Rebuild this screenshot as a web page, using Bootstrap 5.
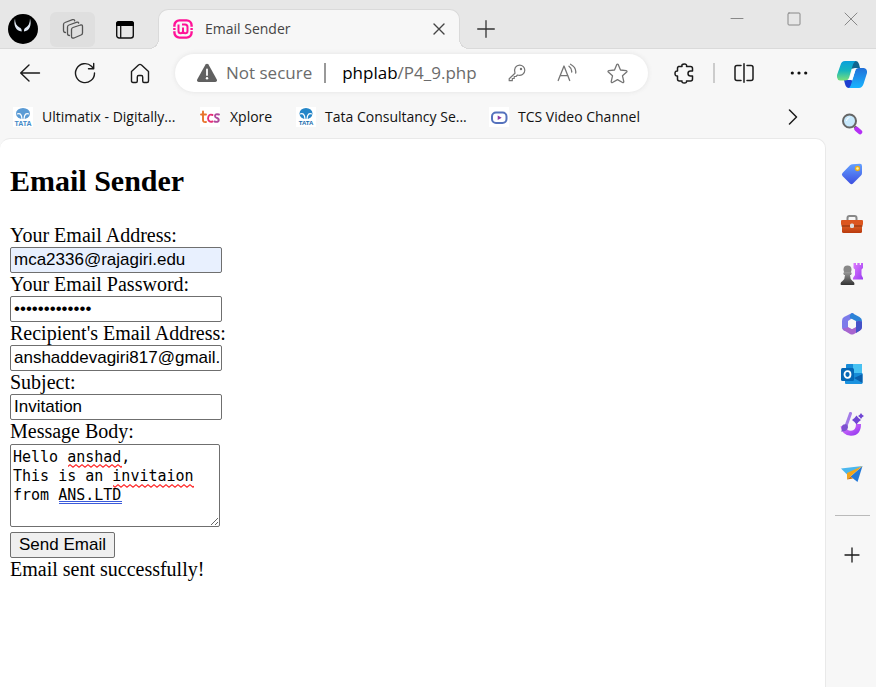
<!DOCTYPE html>
<html lang="en">
<head>
<meta charset="utf-8">
<meta name="viewport" content="width=device-width, initial-scale=1">
<title>Email Sender</title>
<link href="https://cdn.jsdelivr.net/npm/bootstrap@5.3.0/dist/css/bootstrap.min.css" rel="stylesheet">
<style>
  body { font-family: "Open Sans", "Noto Sans", sans-serif; font-size: 14px; line-height: 20px; color: #1b1b1b; background: #f7f7f7; }
  svg { display: block; flex: none; }
  .ln { fill: none; stroke: currentColor; stroke-linecap: round; stroke-linejoin: round; }
  .plain { border: 0; background: transparent; padding: 0; color: inherit; display: flex; align-items: center; justify-content: center; }
  .strip { height: 49px; background: #e7e7e7; border-bottom: 1px solid #dadada; }
  .strip-tools { width: 158px; padding: 10px 0 0 8px; }
  .workspaces { width: 45px; height: 35px; background: #dfdfdf; border-radius: 6px; color: #555; margin-left: 12px; margin-right: 21px; }
  .page-tab { position: relative; flex: 0 1 302px; height: 40px; margin: 9px 0 -1px; padding: 0 13px 2px 14px; background: #f7f7f7; border: 1px solid #dadada; border-bottom: 0; border-radius: 10px 10px 0 0; color: #444; }
  .page-tab::before, .page-tab::after { content: ""; position: absolute; bottom: 0; width: 10px; height: 10px; }
  .page-tab::before { left: -10px; background: radial-gradient(circle at 0 0, #e7e7e7 9px, #dadada 9px, #dadada 10px, #f7f7f7 10px); }
  .page-tab::after { right: -10px; background: radial-gradient(circle at 100% 0, #e7e7e7 9px, #dadada 9px, #dadada 10px, #f7f7f7 10px); }
  .new-tab { width: 52px; height: 40px; color: #333; margin-top: 9px; }
  .win-buttons { gap: 7px; color: #888; }
  .win-buttons button { width: 50px; height: 38px; }
  .toolbar { height: 48px; padding-left: 2px; }
  .tool { width: 55px; height: 40px; }
  .address { height: 38px; margin: 0 8px; padding: 0 6px 0 21px; border-radius: 19px; background: #fff; box-shadow: 0 0 5px #e2e2e2; font-size: 17px; line-height: 24px; color: #6b6b6b; }
  .address button { width: 50px; height: 36px; color: #757575; }
  .host { color: #000; }
  .bar { width: 2px; height: 20px; margin: 0 16px 0 12px; background: #999; }
  .bar-soft { width: 2px; height: 20px; margin: 0 1px 0 2px; background: #ccc; }
  .bookmarks { display: grid; grid-template-columns: 187px 96px 193px auto 1fr; height: 41px; padding: 0 0 2px 13px; align-items: center; }
  .bookmarks a { color: #111; text-decoration: none; display: flex; gap: 9px; align-items: center; white-space: nowrap; }
  .bookmarks button { width: 30px; height: 30px; margin-right: 18px; justify-self: end; }
  .viewport-page { background: #fff; border: 1px solid #e9e9e9; border-left: 0; border-bottom: 0; border-radius: 10px 10px 0 0; padding: 24px 10px 20px; font-family: "Liberation Serif", serif; font-size: 20px; line-height: 23px; color: #000; }
  .viewport-page h1 { font-size: 30px; line-height: 35px; font-weight: 700; margin: 0 0 26px; }
  .viewport-page label { display: block; }
  .field, .message, .send { border: 1px solid #6f6f6f; border-radius: 2px; color: #000; font-family: "Liberation Sans", sans-serif; font-size: 17px; }
  .field { display: block; width: 212px; height: 26px; padding: 0 1px 0 3px; background: #fff; }
  .autofilled { background: #e8f0fe; }
  .message-box { position: relative; width: 210px; margin-top: 1px; }
  .message { display: block; width: 210px; height: 83px; padding: 3px 2px; font-family: "DejaVu Sans Mono", monospace; font-size: 15px; line-height: 19px; overflow: hidden; }
  .proofing { position: absolute; left: 0; top: 0; pointer-events: none; }
  .send { display: block; height: 26px; margin-top: 5px; padding: 0 8px; background: #efefef; line-height: 22px; }
  .side { width: 50px; flex: none; }
  .side button { width: 50px; height: 50px; padding-left: 2px; }
  .side hr { width: 35px; margin: 16px 6px 14px 9px; border-color: #888; opacity: .55; }
</style>
<script src="https://cdn.jsdelivr.net/npm/bootstrap@5.3.0/dist/js/bootstrap.bundle.min.js"></script>
</head>
<body class="d-flex flex-column min-vh-100">

<header class="strip d-flex">
  <div class="strip-tools d-flex align-items-center flex-shrink-0">
    <button class="plain" type="button" aria-label="Profile">
      <svg width="30" height="30" viewBox="0 0 30 30"><circle cx="15" cy="15" r="15" fill="#000"/><path d="M7 4.500C5 11 8 17 13.700 17.500C13.900 15.500 13 14 11.500 13.500C8.500 12 7 9 7 4.500ZM22 4.500C24 11 21.500 17 16 17.500C15.800 15.500 16.500 14 18 13.500C20.500 12 22 9 22 4.500Z" fill="#dfe7f2"/></svg>
    </button>
    <button class="plain workspaces" type="button" aria-label="Workspaces">
      <svg class="ln" width="22" height="22" viewBox="0 0 22 22" stroke-width="1.300"><path d="M11 9.500L18.500 7Q20.500 6.500 20.500 8.500V15Q20.500 16.500 19 17L12 20Q9.500 20.500 9.500 18.500V11.500Q9.500 10 11 9.500ZM7.500 17.500Q5.500 17.500 5.500 15.500V9Q5.500 7.500 7 7L15 4.200Q16.500 4 16.700 5M3.500 14.500Q1.500 14.500 1.500 12.500V6.500Q1.500 5 3 4.500L10.500 1.700Q12.500 1.300 12.700 2.800"/></svg>
    </button>
    <button class="plain" type="button" aria-label="Tab actions">
      <svg width="18" height="19" viewBox="0 0 18 19"><rect x=".7" y="1.700" width="16.600" height="16.300" rx="2.500" fill="none" stroke="#111" stroke-width="1.400"/><path d="M0 6V3.500Q0 1 2.500 1H15.500Q18 1 18 3.500V6Z" fill="#000"/><path d="M4.700 6V18" stroke="#111" stroke-width="1.300"/></svg>
    </button>
  </div>
  <div class="page-tab d-flex align-items-center">
    <svg width="20" height="20" viewBox="0 0 20 20" fill="none" stroke="#ff1297"><rect x="1.400" y="1.400" width="17.200" height="17.200" rx="5" stroke-width="2.400"/><path d="M0 8.300H3M0 11.700H3M17 8.300H20M17 11.700H20" stroke="#f7f7f7" stroke-width="1.200"/><path d="M5.500 5.500V12Q5.500 14.200 7.700 14.200Q10 14.200 10 12V8.500M10 12Q10 14.200 12.300 14.200Q14.500 14.200 14.500 12V8Q14.500 5.500 12 5.500H9" stroke-width="2"/></svg>
    <span class="flex-grow-1 text-truncate ms-2 ps-1">Email Sender</span>
    <button class="plain" type="button" aria-label="Close tab">
      <svg class="ln" width="14" height="14" viewBox="0 0 14 14" stroke-width="1.400"><path d="M2 2L12 12M12 2L2 12"/></svg>
    </button>
  </div>
  <button class="plain new-tab" type="button" aria-label="New tab">
    <svg class="ln" width="18" height="18" viewBox="0 0 18 18" stroke-width="1.300"><path d="M9 .7V17.300M.7 9H17.300"/></svg>
  </button>
  <div class="win-buttons d-flex ms-auto">
    <button class="plain" type="button" aria-label="Minimize"><svg class="ln" width="14" height="14" viewBox="0 0 14 14"><path d="M1 6.500H13"/></svg></button>
    <button class="plain" type="button" aria-label="Maximize"><svg class="ln" width="14" height="14" viewBox="0 0 14 14"><rect x="1" y="1" width="12" height="12" rx="1"/></svg></button>
    <button class="plain" type="button" aria-label="Close"><svg class="ln" width="14" height="14" viewBox="0 0 14 14"><path d="M1 1L13 13M13 1L1 13"/></svg></button>
  </div>
</header>

<div class="d-flex flex-grow-1">
  <div class="d-flex flex-column flex-grow-1">
    <nav class="toolbar d-flex align-items-center" aria-label="Browser toolbar">
      <button class="plain tool" type="button" aria-label="Back"><svg class="ln" width="22" height="20" viewBox="0 0 22 20" stroke-width="1.400"><path d="M10 2L1.700 10L10 18M2 10H20.500"/></svg></button>
      <button class="plain tool" type="button" aria-label="Refresh"><svg class="ln" width="22" height="22" viewBox="0 0 22 22" stroke-width="1.400"><path d="M20.500 11A9.500 9.500 0 1 1 17.500 4.200L19.500 6.500M19.700 1.500V6.700H14.500"/></svg></button>
      <button class="plain tool" type="button" aria-label="Home"><svg class="ln" width="20" height="21" viewBox="0 0 20 21" stroke-width="1.400"><path d="M1.500 8.500L8.500 2Q10 .8 11.500 2L18.500 8.500V18Q18.500 19.500 17 19.500H14Q12.700 19.500 12.700 18V14Q12.700 12.500 11.300 12.500H8.700Q7.300 12.500 7.300 14V18Q7.300 19.500 6 19.500H3Q1.500 19.500 1.500 18Z"/></svg></button>
      <div class="address d-flex align-items-center flex-grow-1">
        <svg width="22" height="20" viewBox="0 0 22 20"><path d="M9.500 1.500Q11 -.2 12.500 1.500L20.800 16.500Q21.500 19 19.300 19H2.700Q.5 19 1.200 16.500Z" fill="#606060"/><path d="M11 6.500V12" stroke="#fff" stroke-width="1.800" stroke-linecap="round"/><circle cx="11" cy="15.300" r="1.200" fill="#fff"/></svg>
        <span class="ms-2 text-nowrap">Not secure</span>
        <span class="bar"></span>
        <span class="text-nowrap flex-grow-1"><span class="host">phplab</span>/P4_9.php</span>
        <button class="plain" type="button" aria-label="Saved password"><svg class="ln" width="18" height="18" viewBox="0 0 18 18" stroke-width="1.200"><path d="M7 9.200C5.500 4.500 8 1.200 11.700 1.200C14.500 1.200 16.800 3.500 16.800 6.200C16.800 10 13.200 12 9.500 11L8 12.500H6.200V14.500H4.300V16.700H1.200V14.700Z"/><circle cx="13" cy="5" r=".6"/></svg></button>
        <button class="plain" type="button" aria-label="Read aloud"><svg class="ln" width="20" height="20" viewBox="0 0 20 20" stroke-width="1.300"><path d="M1.200 17.500L7 3L12.700 17.500M3 12.700H11M12 3.200Q15 5.500 14.700 9M13.500 1.200Q19.500 4.500 18.700 10"/></svg></button>
        <button class="plain" type="button" aria-label="Add to favorites"><svg class="ln" width="21" height="21" viewBox="0 0 21 21" stroke-width="1.300"><path d="M9.700 1.700Q10.500 .5 11.300 1.700L13.500 7L19.200 7.600Q20.500 8 19.700 9L15.500 12.800L16.800 18.600Q16.700 20 15.500 19.500L10.500 16.600L5.500 19.500Q4.300 20 4.200 18.600L5.500 12.800L1.300 9Q.5 8 1.800 7.600L7.500 7Z"/></svg></button>
      </div>
      <button class="plain tool" type="button" aria-label="Extensions"><svg class="ln" width="20" height="21" viewBox="0 0 20 21" stroke-width="1.500"><path d="M4.500 3.500H8Q7.300 1 10.300 1Q13.200 1 12.500 3.500H16.500Q18.500 3.500 18.500 5.500V8H16.500Q14 8 14 10.500Q14 13 16.500 13H18.500V16Q18.500 18 16.500 18H12.500Q13 20 10.300 20Q7.500 20 8 18H5.500Q3.500 18 3.500 16V13Q1 13.300 1 10.500Q1 7.700 3.500 8V5.500Q3.500 3.500 5 3.500"/></svg></button>
      <span class="bar-soft"></span>
      <button class="plain tool" type="button" aria-label="Split screen"><svg class="ln" width="20" height="20" viewBox="0 0 20 20" stroke-width="1.500"><path d="M10 .8V19.200M7 2.500H3Q1 2.500 1 4.500V15.500Q1 17.500 3 17.500H7M13 2.500H17Q19 2.500 19 4.500V15.500Q19 17.500 17 17.500H13"/></svg></button>
      <button class="plain tool" type="button" aria-label="Settings and more"><svg width="18" height="4" viewBox="0 0 18 4" fill="#111"><circle cx="2.300" cy="2" r="1.600"/><circle cx="9" cy="2" r="1.600"/><circle cx="15.700" cy="2" r="1.600"/></svg></button>
    </nav>

    <nav class="bookmarks" aria-label="Favorites">
      <a href="#"><svg width="20" height="20" viewBox="0 0 20 20"><rect width="20" height="20" fill="#fff"/><ellipse cx="10" cy="6.500" rx="7" ry="5.500" fill="#5b9bd5"/><path d="M4 7Q8.500 5 9 12M16 7Q11.500 5 11 12" stroke="#fff" stroke-width="1.200" fill="none"/><text x="10" y="19" text-anchor="middle" font-family="Liberation Sans, sans-serif" font-size="7" font-weight="700" fill="#4389c7">TATA</text></svg><span>Ultimatix - Digitally...</span></a>
      <a href="#"><svg width="21" height="20" viewBox="0 0 21 20" fill="none" stroke-width="1.900" stroke-linecap="round"><rect width="20" height="20" fill="#fff" stroke="none"/><path d="M3 4.500V13Q3 15.500 6 15M1 7.500H6" stroke="#e8742c"/><path d="M12.500 8Q8.500 6.500 8 11.500Q8.500 15.500 12.500 14.500" stroke="#e62e78"/><path d="M19 7.500Q15 6.500 15 9Q15 10.500 17 11Q19.500 12 18.500 14Q17 15.500 14.500 14.500" stroke="#b04b9d"/></svg><span>Xplore</span></a>
      <a href="#"><svg width="20" height="20" viewBox="0 0 20 20"><rect width="20" height="20" fill="#fff"/><ellipse cx="10" cy="6.500" rx="6.500" ry="5.500" fill="#2586c8"/><path d="M4 7Q8.500 5 9 12M16 7Q11.500 5 11 12" stroke="#fff" stroke-width="1.200" fill="none"/><text x="10" y="18" text-anchor="middle" font-family="Liberation Sans, sans-serif" font-size="6" font-weight="700" fill="#126bad">TATA</text></svg><span>Tata Consultancy Se...</span></a>
      <a href="#"><svg width="20" height="20" viewBox="0 0 20 20"><rect width="20" height="20" fill="#fff"/><rect x="3" y="5.500" width="14.500" height="10.500" rx="4" fill="#fff" stroke="#5572bd" stroke-width="2"/><path d="M8.700 8.500V13L12.700 10.700Z" fill="#8d3aa6"/></svg><span>TCS Video Channel</span></a>
      <button class="plain" type="button" aria-label="More favorites"><svg class="ln" width="10" height="16" viewBox="0 0 10 16" stroke-width="1.500"><path d="M1.500 1L8.500 8L1.500 15"/></svg></button>
    </nav>

    <main class="viewport-page flex-grow-1">
      <h1>Email Sender</h1>
      <form>
        <label for="sender">Your Email Address:</label>
        <input class="field autofilled" id="sender" type="email" value="mca2336@rajagiri.edu">
        <label for="password">Your Email Password:</label>
        <input class="field" id="password" type="password" value="abcdefghijklm">
        <label for="recipient">Recipient's Email Address:</label>
        <input class="field" id="recipient" type="email" value="anshaddevagiri817@gmail.com">
        <label for="subject">Subject:</label>
        <input class="field" id="subject" type="text" value="Invitation">
        <label for="message">Message Body:</label>
        <div class="message-box">
          <textarea class="message" id="message" spellcheck="false">Hello anshad,
This is an invitaion
from ANS.LTD</textarea>
          <svg class="proofing" width="210" height="83" viewBox="0 0 210 83" fill="none" aria-hidden="true">
            <defs><pattern id="wave" width="6" height="4" patternUnits="userSpaceOnUse"><path d="M-1 0L0 .7L3 3.200L6 .7L7 0" stroke="#ff2a2a" stroke-width="1.200"/></pattern></defs>
            <g fill="url(#wave)"><rect x="58" y="20" width="54" height="4"/><rect x="103" y="40" width="81" height="4"/></g>
            <path d="M49 57.500H112M49 59.500H112" stroke="#3b5bdb"/>
          </svg>
        </div>
        <button class="send" type="button">Send Email</button>
      </form>
      <p class="mb-0" role="status">Email sent successfully!</p>
    </main>
  </div>

  <aside class="side" aria-label="Sidebar">
    <svg width="0" height="0" aria-hidden="true"><defs>
      <linearGradient id="teal" x1="0" y1="0" x2="0" y2="1"><stop stop-color="#0a9fdc"/><stop offset=".5" stop-color="#17b6bd"/><stop offset="1" stop-color="#7be07a"/></linearGradient>
      <linearGradient id="azure" x1="0" y1="0" x2="0" y2="1"><stop stop-color="#2270d8"/><stop offset="1" stop-color="#19b4ff"/></linearGradient>
      <linearGradient id="tagblue" x1="0" y1="0" x2="0" y2="1"><stop stop-color="#63a0ff"/><stop offset="1" stop-color="#3d4fe0"/></linearGradient>
      <linearGradient id="violet" x1="0" y1="0" x2="1" y2="1"><stop stop-color="#e07bff"/><stop offset="1" stop-color="#9a3df0"/></linearGradient>
      <linearGradient id="coal" x1="0" y1="0" x2="0" y2="1"><stop stop-color="#999"/><stop offset="1" stop-color="#333"/></linearGradient>
      <linearGradient id="brick" x1="0" y1="0" x2="0" y2="1"><stop stop-color="#e96a2c"/><stop offset="1" stop-color="#b93a0d"/></linearGradient>
    </defs></svg>
    <button class="plain" type="button" aria-label="Copilot"><svg width="30" height="27" viewBox="0 0 30 27"><path d="M15 0H19Q21 0 22 3L23 7H18L14 8Z" fill="#12658f"/><path d="M7 19H14L18 21L14 27H12Q9 27 8 23Z" fill="#1d3fd0"/><path d="M8 0H19Q16.500 1 15.500 5L12 17Q11 19.500 8 19.500H3Q-.5 19 0 14L3.500 4Q4.500 0 8 0Z" fill="url(#teal)"/><path d="M22 27H12Q13.500 26 14.500 22L18 10Q19 7 22 7H27Q30.500 7.500 30 12L26.500 23Q25 27 22 27Z" fill="url(#azure)"/><path d="M16 8.500H18.700L15.500 18.500H11.500Q12.500 18 13 16Z" fill="#fff"/></svg></button>
    <button class="plain" type="button" aria-label="Search"><svg width="22" height="22" viewBox="0 0 22 22"><path d="M13.500 13.500L16 16" stroke="#666" stroke-width="3"/><path d="M15.500 16L19 19" stroke="#b430f5" stroke-width="4.500" stroke-linecap="round"/><circle cx="8.500" cy="8" r="6.500" fill="#c7e8fb" stroke="#666" stroke-width="2"/><path d="M5.500 8Q5.500 5 8.500 4.500" stroke="#fff" fill="none"/></svg></button>
    <button class="plain" type="button" aria-label="Shopping"><svg width="22" height="22" viewBox="0 0 22 22"><path d="M11.500 1.200L19 .8Q21 .8 21 3V10Q21 11.500 20 12.500L12 20.500Q10.500 21.800 9 20.500L1.500 13Q.2 11.500 1.500 10L9 2.300Q10 1.200 11.500 1.200Z" fill="url(#tagblue)"/><circle cx="16.500" cy="5.500" r="2" fill="#fff3a8" stroke="#e8ad1b" stroke-width="1.300"/></svg></button>
    <button class="plain" type="button" aria-label="Tools"><svg width="24" height="20" viewBox="0 0 24 20"><path d="M7.500 7V4Q7.500 2 9.500 2H14.500Q16.500 2 16.500 4V7" fill="none" stroke="#888" stroke-width="2"/><rect x="2" y="9" width="20" height="10" rx="1.500" fill="url(#brick)"/><path d="M2 6H22Q23 6 23 7V10Q23 12 21 12H3Q1 12 1 10V7Q1 6 2 6Z" fill="#dc561f"/><path d="M1.500 12H22.500" stroke="#86300f"/><rect x="10" y="9.500" width="4" height="4.500" rx="1.500" fill="#ddd"/></svg></button>
    <button class="plain" type="button" aria-label="Games"><svg width="24" height="24" viewBox="0 0 24 24"><path d="M13.500 1H16V3H17.300V1H19.700V3H21V1H23V6L21.500 7.500V13L23 16V17.500H13V16L15 13V7.500L13.500 6Z" fill="url(#violet)"/><circle cx="7.500" cy="7.500" r="4" fill="#888"/><path d="M4 10H11Q12.500 11.500 11 13H10Q10 17 12.500 19Q14.500 20 14.500 22Q14.500 23 13.500 23H1.500Q.5 23 .5 22Q.5 20 2.500 19Q5 17 5 13H4Q2.500 11.500 4 10Z" fill="url(#coal)"/></svg></button>
    <button class="plain" type="button" aria-label="Microsoft 365"><svg width="22" height="24" viewBox="0 0 22 24"><path d="M11 1L3 5Q1 6 1 9V15Q1 18 4 19L7 16V9L13 5V2Q12 .5 11 1Z" fill="#7d7bea"/><path d="M11 1L18.500 5Q21 6.500 21 9V14L15 12V9L9 6Q8 3 11 1Z" fill="#2c83d8"/><path d="M21 10V15Q21 17 19 18.500L13 22Q11 23 9 22L4 19Q2 18 1.500 16Q4 17 7 15L11 17L15 15V10Q18 8 21 10Z" fill="#a765cf"/><path d="M21 10V15Q21 17 19 18.500L15 21V10Q18 8 21 10Z" fill="#4451c7"/><path d="M11 7.500L15 10V14.500L11 17L7 14.500V10Z" fill="#f7f7f7"/></svg></button>
    <button class="plain" type="button" aria-label="Outlook"><svg width="22" height="22" viewBox="0 0 22 22"><rect x="5" y="1" width="16" height="16" rx="1" fill="#168bd8"/><path d="M12 1H20Q21 1 21 2V10H12Z" fill="#48c2f2"/><path d="M4 10L13 15L21.500 10V20Q21.500 21 20.500 21H5Q4 21 4 20Z" fill="#1b92df"/><path d="M21.500 11V20L13 15Z" fill="#0a5fac"/><rect x="0" y="5" width="13" height="13" rx="1.500" fill="#0567b5"/><ellipse cx="6.500" cy="11.500" rx="3" ry="3.300" fill="none" stroke="#fff" stroke-width="1.800"/></svg></button>
    <button class="plain" type="button" aria-label="Designer"><svg width="24" height="24" viewBox="0 0 24 24"><path d="M3 14Q4 21 11 21.300Q18.500 21 18.500 12" fill="none" stroke="url(#violet)" stroke-width="5"/><path d="M10.500 1.500L6 14" stroke="#a47be8" stroke-width="3" stroke-linecap="round"/><path d="M3.500 12.500Q8 11 8 15.500Q7 20 1 19.500Q2.500 18 1.500 15.500Q1.500 13.500 3.500 12.500Z" fill="#7d52cf"/><path d="M16.500 3.500L18.500 6L21 8L18.500 10L16.500 12.500L14.500 10L12 8L14.500 6ZM21 1L22.200 2.800L24 4L22.200 5.200L21 7L19.800 5.200L18 4L19.800 2.800Z" fill="#7046d3"/></svg></button>
    <button class="plain" type="button" aria-label="Drop"><svg width="22" height="18" viewBox="0 0 22 18"><path d="M0 3.500L21.500 1L6 9.500Z" fill="#4bb7ee"/><path d="M21.500 1L16.500 17L9.500 11.500Z" fill="#2479d8"/><path d="M21.500 1L6 8V14.500L10 11Z" fill="#f3a51b"/><path d="M6 14.500L9.500 11.500L12 13.500Z" fill="#c86e12"/></svg></button>
    <hr>
    <button class="plain" type="button" aria-label="Customize sidebar"><svg class="ln" width="16" height="16" viewBox="0 0 16 16" stroke-width="1.300"><path d="M8 1V15M1 8H15"/></svg></button>
  </aside>
</div>
</body>
</html>
